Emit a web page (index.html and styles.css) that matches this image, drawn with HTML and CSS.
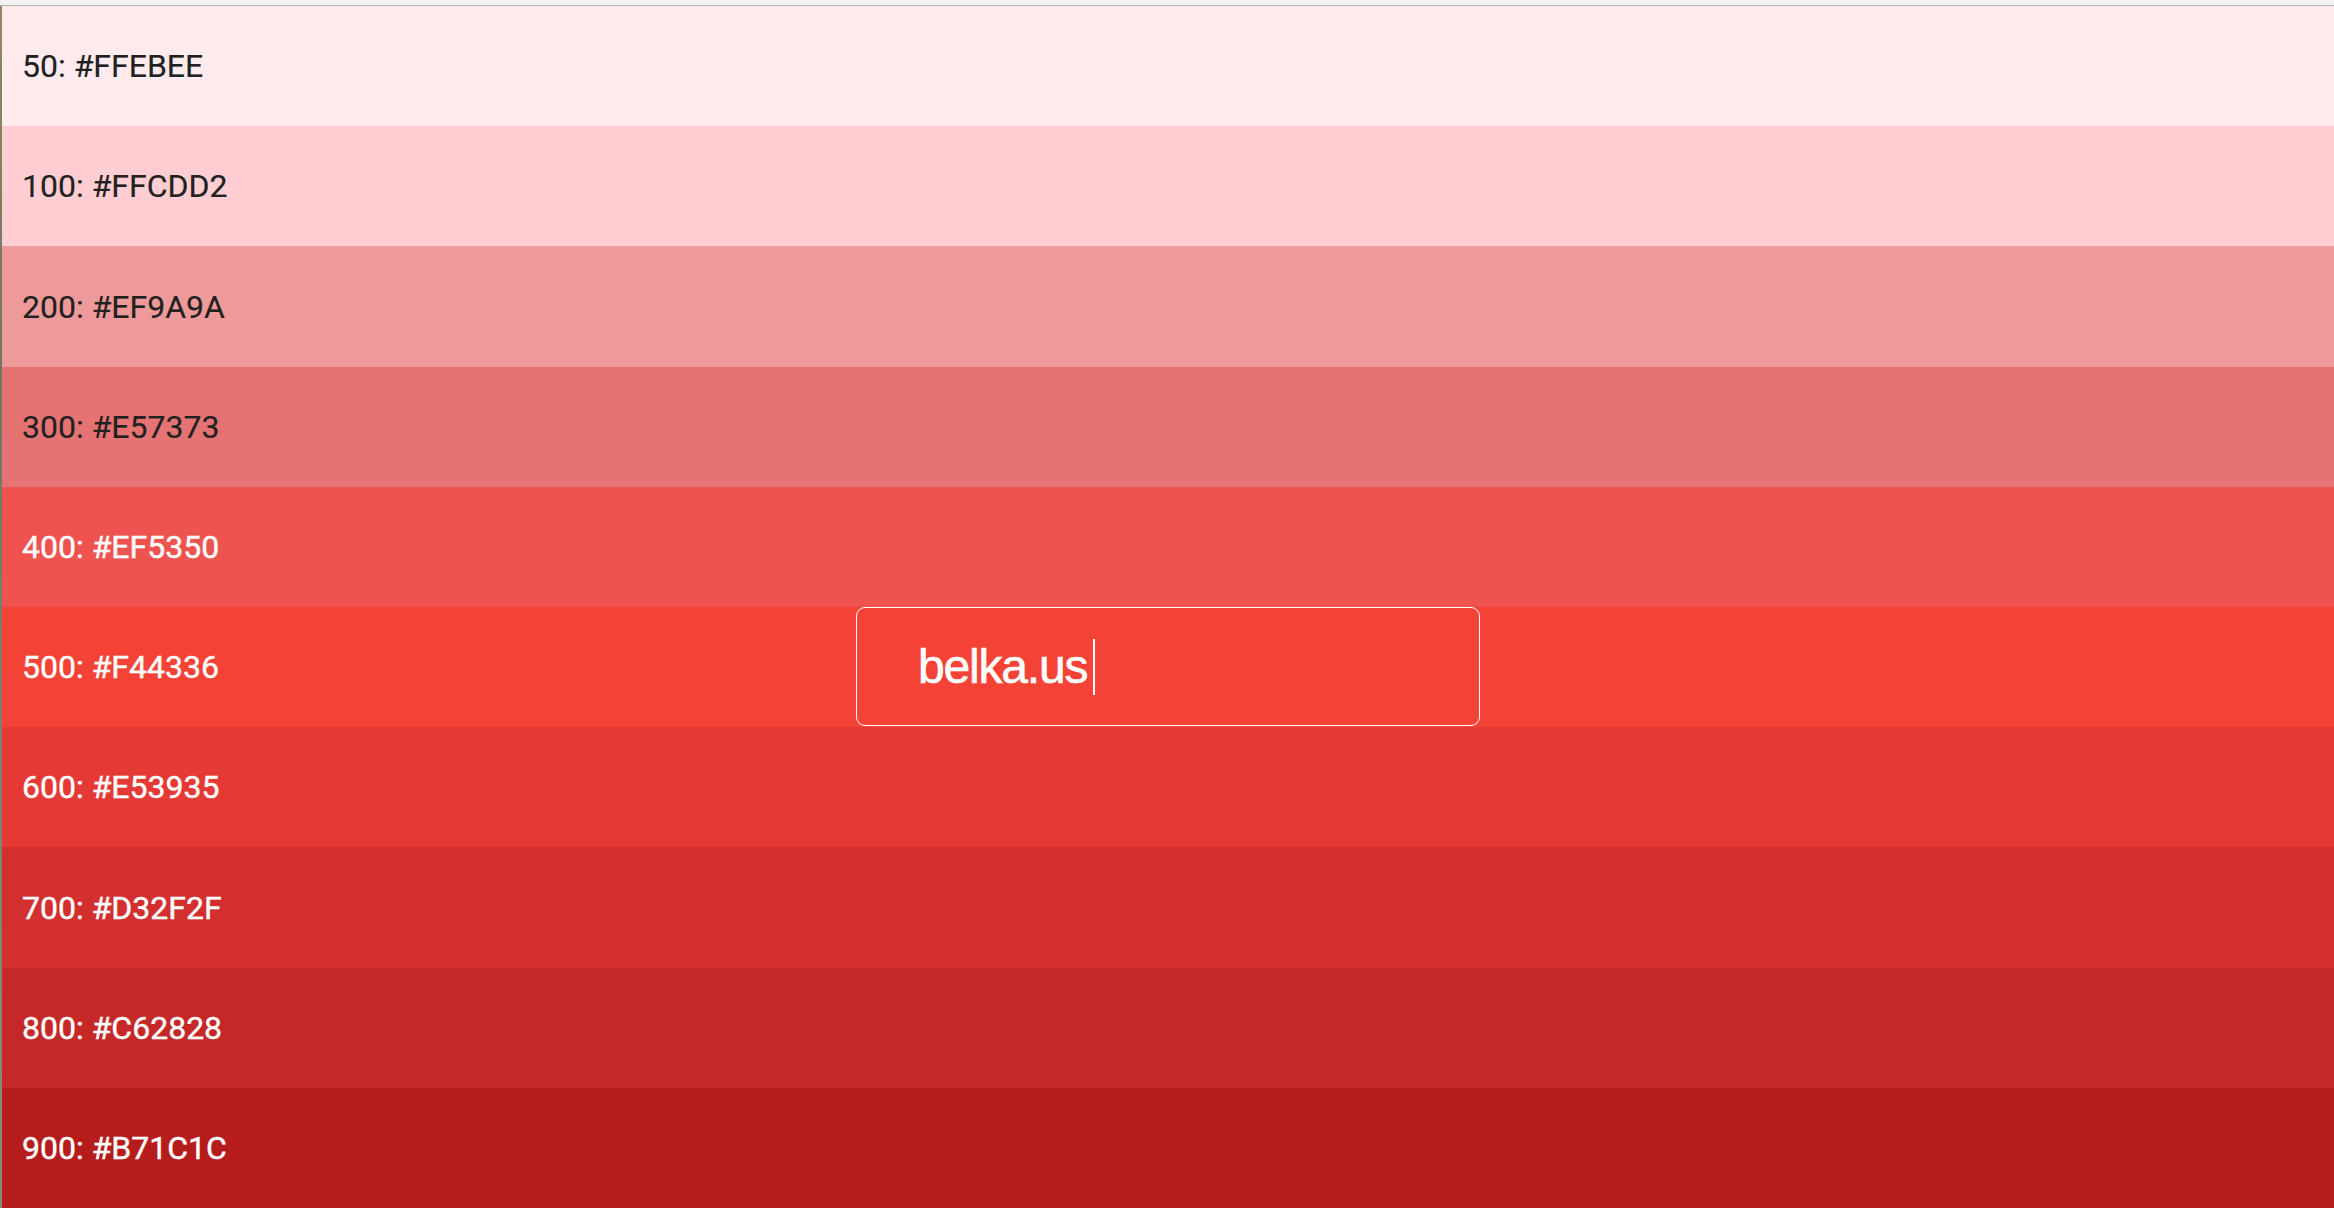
FILE: index.html
```html
<!DOCTYPE html>
<html lang="en">
<head>
<meta charset="utf-8">
<title>Red palette</title>
<link rel="stylesheet" href="styles.css">
</head>
<body>
<div class="window">
  <div class="topbar"></div>
  <div class="frame">
    <div class="edge"></div>
    <main class="palette">
      <div class="swatch dark s50">50: #FFEBEE</div>
      <div class="swatch dark s100">100: #FFCDD2</div>
      <div class="swatch dark s200">200: #EF9A9A</div>
      <div class="swatch dark s300">300: #E57373</div>
      <div class="swatch light s400">400: #EF5350</div>
      <div class="swatch light s500">500: #F44336
        <div class="field"><span class="field-text">belka.us</span><span class="caret"></span></div>
      </div>
      <div class="swatch light s600">600: #E53935</div>
      <div class="swatch light s700">700: #D32F2F</div>
      <div class="swatch light s800">800: #C62828</div>
      <div class="swatch light s900">900: #B71C1C</div>
    </main>
  </div>
</div>
</body>
</html>
```
FILE: styles.css
```css
html, body {
  margin: 0;
  padding: 0;
  height: 100%;
  overflow: hidden;
}

.window {
  display: flex;
  flex-direction: column;
  height: 1208px;
  width: 2334px;
}

.topbar {
  height: 5px;
  background: #f1f1f1;
  border-bottom: 1px solid #b3b3b3;
  flex: none;
}

.frame {
  flex: 1;
  display: flex;
  min-height: 0;
}

.edge {
  width: 2px;
  flex: none;
  background: linear-gradient(to bottom, #8c8a5e, #6f7560 30%, #7d7f74 60%, #8b8b7c);
}

.palette {
  flex: 1;
  display: flex;
  flex-direction: column;
}

.swatch {
  flex: 1;
  display: flex;
  align-items: center;
  padding-left: 20px;
  font-family: Roboto, "Liberation Sans", sans-serif;
  font-size: 32px;
  position: relative;
}

.dark { color: #212121; -webkit-text-stroke: 0.15px #212121; }
.light { color: #ffffff; -webkit-text-stroke: 0.4px #ffffff; }

.s50 { background: #FFEBEE; }
.s100 { background: #FFCDD2; }
.s200 { background: #EF9A9A; }
.s300 { background: #E57373; }
.s400 { background: #EF5350; }
.s500 { background: #F44336; }
.s600 { background: #E53935; }
.s700 { background: #D32F2F; }
.s800 { background: #C62828; }
.s900 { background: #B71C1C; }

.field {
  position: absolute;
  top: 0;
  left: 50%;
  transform: translateX(-50%);
  width: 561px;
  height: 117px;
  border: 1px solid #ffffff;
  border-radius: 9px;
  display: flex;
  align-items: center;
  padding-left: 61px;
  box-sizing: content-box;
  font-family: "Liberation Sans", Arial, sans-serif;
  font-weight: 400;
  font-size: 48px;
  letter-spacing: -1.2px;
  color: #ffffff;
  -webkit-text-stroke: 0.6px #ffffff;
}

.caret {
  width: 2px;
  height: 56px;
  background: #ffffff;
  margin-left: 6px;
}
```
